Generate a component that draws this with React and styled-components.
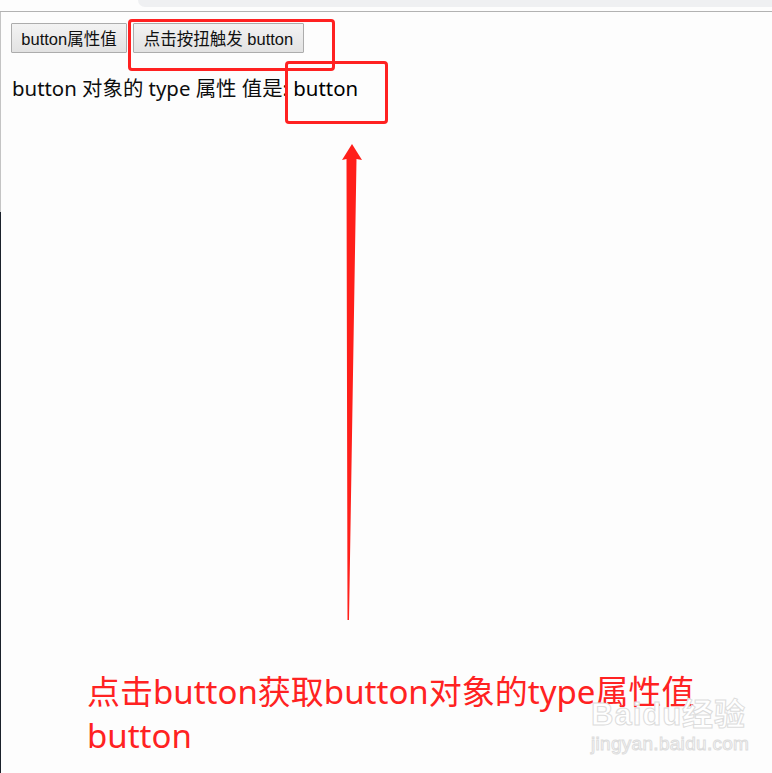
import React from 'react';
import styled, { createGlobalStyle } from 'styled-components';

const Global = createGlobalStyle`
  html, body { margin: 0; padding: 0; background: #fff; }
  body { width: 772px; height: 773px; overflow: hidden; }
`;

const Frame = styled.div`
  position: relative;
  width: 772px;
  height: 773px;
  display: flex;
  flex-direction: column;
  background:
    linear-gradient(#c4c4c4, #c4c4c4) 0 12px / 1px 200px no-repeat,
    linear-gradient(#1b212b, #1b212b) 0 212px / 1px 100% no-repeat,
    #fdfdfd;
  font-family: "Liberation Sans", "Noto Sans CJK SC", sans-serif;
  overflow: hidden;
`;

const TopBar = styled.div`
  height: 12px;
  border-bottom: 1px solid #b2b2b2;
  box-sizing: border-box;
  display: flex;
  justify-content: flex-end;
`;

const Tab = styled.div`
  width: 634px;
  height: 7px;
  background: #eff0f2;
  border-bottom-left-radius: 12px;
`;

const Content = styled.div`
  padding: 11px 0 0 11px;
`;

const ButtonRow = styled.div`
  display: flex;
  gap: 6px;
`;

const Btn = styled.button`
  height: 30px;
  width: ${p => p.$w}px;
  padding: 0;
  font-family: "Liberation Sans", "Noto Sans CJK SC", sans-serif;
  font-size: 16.5px;
  color: #111;
  background: linear-gradient(#f3f3f3, #e2e2e2);
  border: 1px solid #acacac;
  border-radius: 1px;
`;

const Result = styled.p`
  margin: 20px 0 0 1px;
  font-family: "Noto Sans", "Noto Sans CJK SC", sans-serif;
  font-size: 20.4px;
  line-height: 30px;
  color: #0d0d0d;
  white-space: nowrap;
`;

const Value = styled.span`
  color: #000;
`;

const Mark = styled.div`
  position: absolute;
  left: ${p => p.$x}px;
  top: ${p => p.$y}px;
  width: ${p => p.$w}px;
  height: ${p => p.$h}px;
  box-sizing: border-box;
  border: 3px solid #ff2121;
  border-radius: 4px;
`;

const Arrow = styled.svg`
  position: absolute;
  left: 0;
  top: 0;
`;

const Caption = styled.div`
  margin-top: auto;
  padding: 0 0 15px 87px;
  font-family: "Noto Sans", "Noto Sans CJK SC", sans-serif;
  font-size: 33px;
  line-height: 44px;
  color: #ff2222;
`;

const Watermark = styled.div`
  position: absolute;
  left: 591px;
  top: 698px;
  display: flex;
  flex-direction: column;
  color: #fff;
  -webkit-text-stroke: 1px #dcdcdc;
  font-family: "Liberation Sans", "Noto Sans CJK SC", sans-serif;
`;

const Brand = styled.div`
  font-size: 31px;
  font-weight: bold;
  line-height: 34px;
  letter-spacing: 1px;
`;

const Site = styled.div`
  font-size: 19px;
  line-height: 24px;
  letter-spacing: 0.3px;
`;

export default function App() {
  return (
    <Frame>
      <Global />
      <TopBar><Tab /></TopBar>
      <Content>
        <ButtonRow>
          <Btn $w={116}>button属性值</Btn>
          <Btn $w={171}>点击按扭触发 button</Btn>
        </ButtonRow>
        <Result>button 对象的 type 属性 值是: <Value>button</Value></Result>
      </Content>
      <Caption>
        点击button获取button对象的type属性值<br />button
      </Caption>
      <Watermark>
        <Brand>Baidu经验</Brand>
        <Site>jingyan.baidu.com</Site>
      </Watermark>
      <Mark $x={128} $y={19} $w={207} $h={52} />
      <Mark $x={285} $y={61} $w={103} $h={63} />
      <Arrow width="772" height="773" viewBox="0 0 772 773">
        <path d="M352 144 L362 160 L356.5 159 L349 620 L347.5 620 L346.5 159 L342 160 Z" fill="#ff1f1a" />
      </Arrow>
    </Frame>
  );
}
